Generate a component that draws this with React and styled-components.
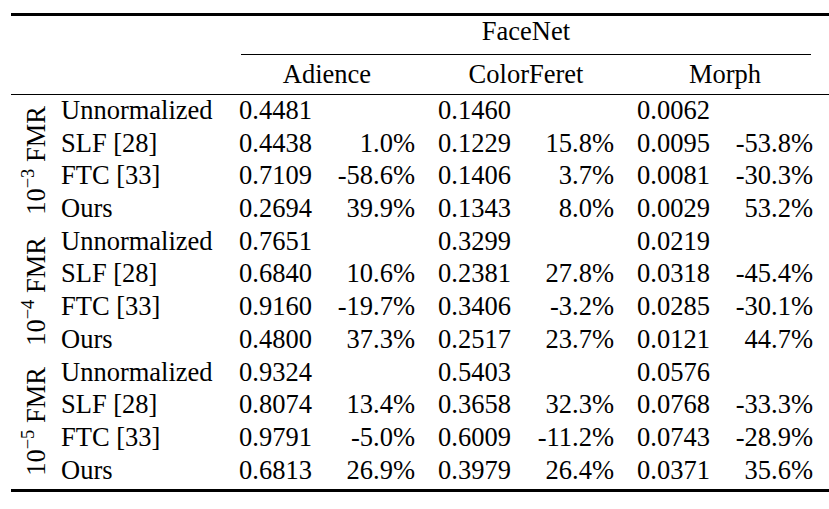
import React from 'react';
import styled, { createGlobalStyle, css } from 'styled-components';

const GlobalStyle = createGlobalStyle`
    html, body {
        margin: 0;
        padding: 0;
        background: #fff;
    }
    body {
        font-family: 'Liberation Serif', 'Times New Roman', serif;
        color: #000;
    }
`;

const columns = css`
    display: grid;
    grid-template-columns: 50px 178px 88px 88px 23px 88px 88px 23px 88px 88px 1fr;
`;

const groups = [
    {
        exp: '3',
        rows: [
            ['Unnormalized', ['0.4481', ''], ['0.1460', ''], ['0.0062', '']],
            ['SLF [28]', ['0.4438', '1.0%'], ['0.1229', '15.8%'], ['0.0095', '-53.8%']],
            ['FTC [33]', ['0.7109', '-58.6%'], ['0.1406', '3.7%'], ['0.0081', '-30.3%']],
            ['Ours', ['0.2694', '39.9%'], ['0.1343', '8.0%'], ['0.0029', '53.2%']],
        ],
    },
    {
        exp: '4',
        rows: [
            ['Unnormalized', ['0.7651', ''], ['0.3299', ''], ['0.0219', '']],
            ['SLF [28]', ['0.6840', '10.6%'], ['0.2381', '27.8%'], ['0.0318', '-45.4%']],
            ['FTC [33]', ['0.9160', '-19.7%'], ['0.3406', '-3.2%'], ['0.0285', '-30.1%']],
            ['Ours', ['0.4800', '37.3%'], ['0.2517', '23.7%'], ['0.0121', '44.7%']],
        ],
    },
    {
        exp: '5',
        rows: [
            ['Unnormalized', ['0.9324', ''], ['0.5403', ''], ['0.0576', '']],
            ['SLF [28]', ['0.8074', '13.4%'], ['0.3658', '32.3%'], ['0.0768', '-33.3%']],
            ['FTC [33]', ['0.9791', '-5.0%'], ['0.6009', '-11.2%'], ['0.0743', '-28.9%']],
            ['Ours', ['0.6813', '26.9%'], ['0.3979', '26.4%'], ['0.0371', '35.6%']],
        ],
    },
];

const datasets = ['Adience', 'ColorFeret', 'Morph'];

const App = () => {
    return (
        <Page>
            <GlobalStyle />
            <Table>
                <Rule $weight={3} />
                <Header>
                    <NetCell>FaceNet</NetCell>
                    <CMidRule />
                    {datasets.map((name, i) => (
                        <DatasetCell key={name} $start={3 + i * 3}>
                            {name}
                        </DatasetCell>
                    ))}
                </Header>
                <Rule $weight={1} />
                {groups.map((group) => (
                    <Group key={group.exp}>
                        <SideLabel>
                            10<sup>−{group.exp}</sup> FMR
                        </SideLabel>
                        {group.rows.map(([label, ...cells], r) => (
                            <React.Fragment key={label}>
                                <LabelCell $row={r + 1}>{label}</LabelCell>
                                {cells.map(([value, pct], c) => (
                                    <React.Fragment key={c}>
                                        <ValueCell $row={r + 1} $col={3 + c * 3}>
                                            {value}
                                        </ValueCell>
                                        <PctCell $row={r + 1} $col={4 + c * 3}>
                                            {pct}
                                        </PctCell>
                                    </React.Fragment>
                                ))}
                            </React.Fragment>
                        ))}
                    </Group>
                ))}
                <Rule $weight={3} $gap={2} />
            </Table>
        </Page>
    );
};

const Page = styled.div`
    padding: 13px 0 0 11px;
    width: 818px;
`;

const Table = styled.div`
    display: flex;
    flex-direction: column;
    font-size: 26.5px;
`;

const Rule = styled.div`
    height: ${(p) => p.$weight}px;
    margin-top: ${(p) => p.$gap || 0}px;
    background: #000;
`;

const Header = styled.div`
    ${columns};
    grid-template-rows: 38px 1px 39px;
`;

const NetCell = styled.div`
    grid-column: 3 / 11;
    grid-row: 1;
    text-align: center;
    line-height: 30px;
`;

const CMidRule = styled.div`
    grid-column: 3 / 11;
    grid-row: 2;
    margin: 0 2px;
    background: #000;
`;

const DatasetCell = styled.div`
    grid-column: ${(p) => p.$start} / span 2;
    grid-row: 3;
    text-align: center;
    line-height: 39px;
`;

const Group = styled.div`
    ${columns};
    grid-template-rows: repeat(4, 32.7px);
    line-height: 30px;
`;

const SideLabel = styled.div`
    grid-column: 1;
    grid-row: 1 / 5;
    justify-self: center;
    align-self: center;
    writing-mode: vertical-rl;
    transform: rotate(180deg);
    line-height: 1;
    white-space: nowrap;
    padding-left: 0;

    sup {
        font-size: 0.7em;
        line-height: 0;
        vertical-align: 0.45em;
    }
`;

const LabelCell = styled.div`
    grid-column: 2;
    grid-row: ${(p) => p.$row};
    white-space: nowrap;
`;

const ValueCell = styled.div`
    grid-column: ${(p) => p.$col};
    grid-row: ${(p) => p.$row};
`;

const PctCell = styled.div`
    grid-column: ${(p) => p.$col};
    grid-row: ${(p) => p.$row};
    text-align: right;
    white-space: nowrap;
`;

export default App;
